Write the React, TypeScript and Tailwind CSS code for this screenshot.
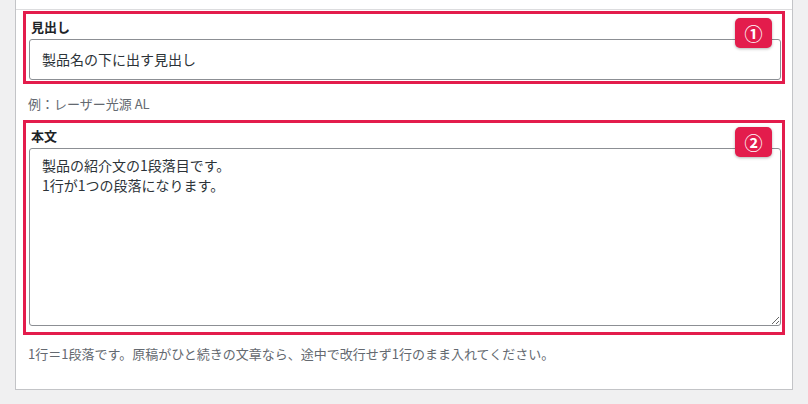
const font = { fontFamily: '"Noto Sans CJK JP", "Noto Sans", sans-serif' };

function Badge({ n }: { n: string }) {
  return (
    <div className="absolute top-[4px] right-[10px] w-[37px] h-[30px] rounded-[5px] bg-[#e31c4c] shadow-[0_1px_3px_rgba(0,0,0,0.3)] flex items-center justify-center text-white text-[18px] font-bold leading-none">
      {n}
    </div>
  );
}

export default function App() {
  return (
    <div
      className="w-[808px] h-[404px] bg-[#f0f0f1] overflow-hidden px-[15px]"
      style={font}
    >
      <div className="w-[778px] h-[390px] bg-white border border-t-0 border-[#c3c4c7]">
        <div className="h-[10px] border-b border-[#dcdcde]" />

        {/* field 1 */}
        <div className="relative mx-[7px] mt-[1px] h-[73px] border-[3px] border-[#e31c4c] pl-[3px] pr-[1px] pt-[3px]">
          <div className="text-[13px] font-bold text-[#1d2327] leading-[20px] pl-[2px]">
            見出し
          </div>
          <div className="mt-[2px] h-[41px] border border-[#8c8f94] rounded-[3px] flex items-center pl-[12px] text-[14px] text-[#2c3338]">
            製品名の下に出す見出し
          </div>
          <Badge n="①" />
        </div>

        <p className="mt-[10px] pl-[12px] text-[13px] text-[#646970] leading-[20px]">
          例：レーザー光源 AL
        </p>

        {/* field 2 */}
        <div className="relative mx-[7px] mt-[6px] h-[215px] border-[3px] border-[#e31c4c] pl-[3px] pr-[1px] pt-[3px]">
          <div className="text-[13px] font-bold text-[#1d2327] leading-[20px] pl-[2px]">
            本文
          </div>
          <textarea
            readOnly
            className="block mt-[2px] w-full h-[178px] border border-[#8c8f94] rounded-[3px] pl-[12px] pt-[6px] text-[14px] leading-[20px] text-[#2c3338] outline-none"
            defaultValue={"製品の紹介文の1段落目です。\n1行が1つの段落になります。"}
          />
          <Badge n="②" />
        </div>

        <p className="mt-[9px] pl-[12px] text-[13px] text-[#646970] leading-[20px]">
          1行＝1段落です。原稿がひと続きの文章なら、途中で改行せず1行のまま入れてください。
        </p>
      </div>
    </div>
  );
}
